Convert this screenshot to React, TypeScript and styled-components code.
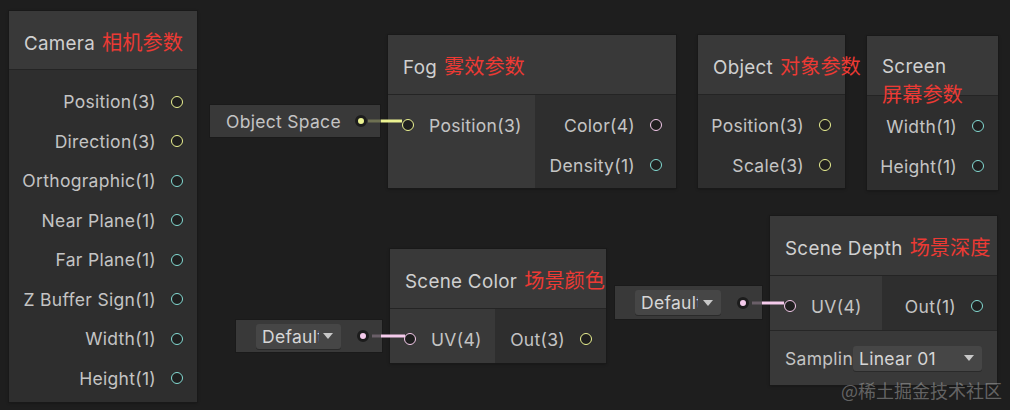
import React from 'react';
import styled, { createGlobalStyle } from 'styled-components';

const Global = createGlobalStyle`
  html, body { margin: 0; padding: 0; background: #1e1e1e; }
  body { font-family: Inter, "Noto Sans", "Noto Sans CJK SC", sans-serif; -webkit-font-smoothing: antialiased; }
`;

const C = {
  v3: '#ecf392',
  v1: '#84dcd4',
  v4: '#f5cbec',
  text: '#c4c4c4',
  title: '#d0d0d0',
  red: '#ec3a34',
  light: '#393939',
  dark: '#2e2e2e',
};

const Canvas = styled.div`
  position: relative;
  width: 1010px;
  height: 410px;
  overflow: hidden;
  background: #1e1e1e;
`;

const Node = styled.div<{ $x: number; $y: number; $w: number; $h: number }>`
  position: absolute;
  left: ${(p) => p.$x}px;
  top: ${(p) => p.$y}px;
  width: ${(p) => p.$w}px;
  height: ${(p) => p.$h}px;
  background: ${C.dark};
  display: flex;
  flex-direction: column;
  box-shadow: 0 0 0 1px #191919, 0 1px 3px rgba(0, 0, 0, 0.4);
`;

const Header = styled.div<{ $h?: number; $nowrap?: boolean }>`
  flex: none;
  height: ${(p) => p.$h ?? 60}px;
  box-sizing: border-box;
  background: ${C.light};
  border-bottom: 1px solid #242424;
  padding: 17px 10px 0 15px;
  line-height: 27px;
  font-size: 18.8px;
  color: ${C.title};
  letter-spacing: 0.3px;
  white-space: ${(p) => (p.$nowrap ? 'nowrap' : 'normal')};
  overflow: visible;
  position: relative;
  z-index: 1;
`;

const Cn = styled.span`
  font-family: "Noto Sans CJK SC", sans-serif;
  font-size: 20.2px;
  color: ${C.red};
  margin-left: 7px;
  letter-spacing: 0;
  white-space: nowrap;
`;

const CnBreak = styled(Cn)`
  margin-left: 0;
`;

const Body = styled.div`
  flex: 1;
  display: flex;
  min-height: 0;
`;

const Column = styled.div<{ $w?: number; $light?: boolean; $pt?: number }>`
  flex: ${(p) => (p.$w ? 'none' : '1')};
  width: ${(p) => (p.$w ? `${p.$w}px` : 'auto')};
  background: ${(p) => (p.$light ? C.light : C.dark)};
  padding-top: ${(p) => p.$pt ?? 10}px;
  box-sizing: border-box;
  display: flex;
  flex-direction: column;
`;

const Row = styled.div<{ $out?: boolean; $h?: number }>`
  height: ${(p) => p.$h ?? 40}px;
  display: flex;
  align-items: center;
  justify-content: ${(p) => (p.$out ? 'flex-end' : 'flex-start')};
  gap: 15px;
  padding: ${(p) => (p.$out ? '0 14px 0 0' : '0 0 0 14px')};
  font-size: 17.5px;
  color: ${C.text};
  letter-spacing: 0.3px;
  white-space: nowrap;
`;

const Port = styled.span<{ $c: string }>`
  flex: none;
  width: 12px;
  height: 12px;
  box-sizing: border-box;
  border-radius: 50%;
  border: 1.8px solid ${(p) => p.$c};
  background: #1f1f1f;
`;

const Field = styled.div<{ $x: number; $y: number; $w: number; $h: number }>`
  position: absolute;
  left: ${(p) => p.$x}px;
  top: ${(p) => p.$y}px;
  width: ${(p) => p.$w}px;
  height: ${(p) => p.$h}px;
  background: ${C.light};
  box-shadow: 0 0 0 1px #1a1a1a;
  display: flex;
  align-items: center;
  box-sizing: border-box;
  padding: 0 13px 0 16px;
  font-size: 17.5px;
  color: ${C.text};
  letter-spacing: 0.3px;
`;

const DropField = styled(Field)`
  padding-left: 20px;
`;

const FieldLabel = styled.span`
  flex: 1;
  white-space: nowrap;
`;

const Dot = styled.span<{ $c: string }>`
  flex: none;
  width: 12px;
  height: 12px;
  box-sizing: border-box;
  border-radius: 50%;
  border: 3px solid #1c1c1c;
  background: ${(p) => p.$c};
`;

const Dropdown = styled.div<{ $w: number }>`
  flex: none;
  width: ${(p) => p.$w}px;
  height: 25px;
  background: #464646;
  border-radius: 3px;
  display: flex;
  align-items: center;
  box-sizing: border-box;
  padding: 0 8px 0 6px;
  font-size: 17.5px;
  color: #d6d6d6;
  letter-spacing: 0.3px;
  box-shadow: 0 1px 0 #2a2a2a;
`;

const DropText = styled.span<{ $clip?: number }>`
  ${(p) => (p.$clip ? `width: ${p.$clip}px; overflow: hidden;` : 'flex: 1;')}
  white-space: nowrap;
`;

const Arrow = styled.span`
  flex: none;
  margin-left: auto;
  width: 0;
  height: 0;
  border-left: 5px solid transparent;
  border-right: 5px solid transparent;
  border-top: 6px solid #c8c8c8;
`;

const SettingRow = styled.div`
  flex: none;
  height: 55px;
  background: ${C.light};
  border-top: 1px solid #262626;
  box-sizing: border-box;
  display: flex;
  align-items: center;
  padding: 0 14px 0 15px;
  font-size: 17.5px;
  color: ${C.text};
  letter-spacing: 0.3px;
`;

const SettingLabel = styled.span`
  width: 68px;
  overflow: hidden;
  white-space: nowrap;
  flex: none;
`;

const Wires = styled.svg`
  position: absolute;
  left: 0;
  top: 0;
  pointer-events: none;
  z-index: 2;
`;

const Watermark = styled.div`
  position: absolute;
  right: 8px;
  bottom: 7px;
  font-family: "Noto Sans CJK SC", sans-serif;
  font-size: 18px;
  color: rgba(200, 200, 200, 0.42);
  z-index: 3;
`;

type P = { label: string; c: string };

const OutRows: React.FC<{ items: P[]; h?: number }> = ({ items, h }) => (
  <>
    {items.map((it) => (
      <Row key={it.label} $out $h={h}>
        {it.label}
        <Port $c={it.c} />
      </Row>
    ))}
  </>
);

const InRow: React.FC<P> = ({ label, c }) => (
  <Row>
    <Port $c={c} />
    {label}
  </Row>
);

const camera: P[] = [
  { label: 'Position(3)', c: C.v3 },
  { label: 'Direction(3)', c: C.v3 },
  { label: 'Orthographic(1)', c: C.v1 },
  { label: 'Near Plane(1)', c: C.v1 },
  { label: 'Far Plane(1)', c: C.v1 },
  { label: 'Z Buffer Sign(1)', c: C.v1 },
  { label: 'Width(1)', c: C.v1 },
  { label: 'Height(1)', c: C.v1 },
];

export default function App() {
  return (
    <>
      <Global />
      <Canvas>
        <Node $x={9} $y={11} $w={188} $h={391}>
          <Header $h={59}>
            Camera<Cn>相机参数</Cn>
          </Header>
          <Body>
            <Column $pt={12}>
              <OutRows items={camera} h={39.5} />
            </Column>
          </Body>
        </Node>

        <Field $x={210} $y={105} $w={170} $h={32}>
          <FieldLabel>Object Space</FieldLabel>
          <Dot $c={C.v3} />
        </Field>

        <Node $x={388} $y={35} $w={288} $h={153}>
          <Header>
            Fog<Cn>雾效参数</Cn>
          </Header>
          <Body>
            <Column $w={147} $light>
              <InRow label="Position(3)" c={C.v3} />
            </Column>
            <Column>
              <OutRows
                items={[
                  { label: 'Color(4)', c: C.v4 },
                  { label: 'Density(1)', c: C.v1 },
                ]}
              />
            </Column>
          </Body>
        </Node>

        <Node $x={698} $y={35} $w={147} $h={153}>
          <Header $nowrap>
            Object<Cn>对象参数</Cn>
          </Header>
          <Body>
            <Column>
              <OutRows
                items={[
                  { label: 'Position(3)', c: C.v3 },
                  { label: 'Scale(3)', c: C.v3 },
                ]}
              />
            </Column>
          </Body>
        </Node>

        <Node $x={867} $y={36} $w={131} $h={154}>
          <Header>
            Screen
            <br />
            <CnBreak>屏幕参数</CnBreak>
          </Header>
          <Body>
            <Column>
              <OutRows
                items={[
                  { label: 'Width(1)', c: C.v1 },
                  { label: 'Height(1)', c: C.v1 },
                ]}
              />
            </Column>
          </Body>
        </Node>

        <DropField $x={236} $y={320} $w={146} $h={32}>
          <Dropdown $w={85}>
            <DropText $clip={57}>Default</DropText>
            <Arrow />
          </Dropdown>
          <FieldLabel />
          <Dot $c={C.v4} />
        </DropField>

        <Node $x={390} $y={249} $w={216} $h={114}>
          <Header $nowrap>
            Scene Color<Cn>场景颜色</Cn>
          </Header>
          <Body>
            <Column $w={105} $light>
              <InRow label="UV(4)" c={C.v4} />
            </Column>
            <Column>
              <OutRows items={[{ label: 'Out(3)', c: C.v3 }]} />
            </Column>
          </Body>
        </Node>

        <DropField $x={615} $y={286} $w={147} $h={33}>
          <Dropdown $w={86}>
            <DropText $clip={57}>Default</DropText>
            <Arrow />
          </Dropdown>
          <FieldLabel />
          <Dot $c={C.v4} />
        </DropField>

        <Node $x={770} $y={216} $w={227} $h={169}>
          <Header $nowrap>
            Scene Depth<Cn>场景深度</Cn>
          </Header>
          <Body>
            <Column $w={112} $light>
              <InRow label="UV(4)" c={C.v4} />
            </Column>
            <Column>
              <OutRows items={[{ label: 'Out(1)', c: C.v1 }]} />
            </Column>
          </Body>
          <SettingRow>
            <SettingLabel>Sampling</SettingLabel>
            <Dropdown $w={129}>
              <DropText>Linear 01</DropText>
              <Arrow />
            </Dropdown>
          </SettingRow>
        </Node>

        <Wires width={1010} height={410} viewBox="0 0 1010 410">
          <line x1={368} y1={121} x2={381} y2={121} stroke="#6e7052" strokeWidth={3} />
          <line x1={381} y1={121} x2={402} y2={121} stroke={C.v3} strokeWidth={3} />
          <line x1={372} y1={336} x2={381} y2={336} stroke="#6a5f68" strokeWidth={3} />
          <line x1={381} y1={336} x2={405} y2={336} stroke={C.v4} strokeWidth={3} />
          <line x1={752} y1={303} x2={762} y2={303} stroke="#6a5f68" strokeWidth={3} />
          <line x1={762} y1={303} x2={784} y2={303} stroke={C.v4} strokeWidth={3} />
        </Wires>

        <Watermark>@稀土掘金技术社区</Watermark>
      </Canvas>
    </>
  );
}
